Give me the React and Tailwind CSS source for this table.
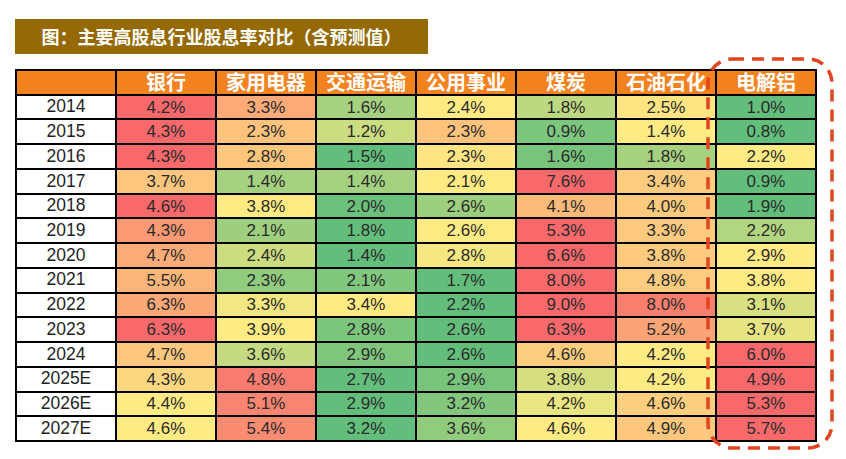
// Dividend yield comparison: each row is shaded with Excel's
// red-yellow-green 3-colour scale (min green, median yellow, max red).

const cols = ["银行", "家用电器", "交通运输", "公用事业", "煤炭", "石油石化", "电解铝"]

const rows = [
  ["2014", [4.2, 3.3, 1.6, 2.4, 1.8, 2.5, 1.0]],
  ["2015", [4.3, 2.3, 1.2, 2.3, 0.9, 1.4, 0.8]],
  ["2016", [4.3, 2.8, 1.5, 2.3, 1.6, 1.8, 2.2]],
  ["2017", [3.7, 1.4, 1.4, 2.1, 7.6, 3.4, 0.9]],
  ["2018", [4.6, 3.8, 2.0, 2.6, 4.1, 4.0, 1.9]],
  ["2019", [4.3, 2.1, 1.8, 2.6, 5.3, 3.3, 2.2]],
  ["2020", [4.7, 2.4, 1.4, 2.8, 6.6, 3.8, 2.9]],
  ["2021", [5.5, 2.3, 2.1, 1.7, 8.0, 4.8, 3.8]],
  ["2022", [6.3, 3.3, 3.4, 2.2, 9.0, 8.0, 3.1]],
  ["2023", [6.3, 3.9, 2.8, 2.6, 6.3, 5.2, 3.7]],
  ["2024", [4.7, 3.6, 2.9, 2.6, 4.6, 4.2, 6.0]],
  ["2025E", [4.3, 4.8, 2.7, 2.9, 3.8, 4.2, 4.9]],
  ["2026E", [4.4, 5.1, 2.9, 3.2, 4.2, 4.6, 5.3]],
  ["2027E", [4.6, 5.4, 3.2, 3.6, 4.6, 4.9, 5.7]],
]

const GREEN = [99, 190, 123]
const YELLOW = [255, 235, 132]
const RED = [248, 105, 107]

function mix(a, b, t) {
  return `rgb(${a.map((v, i) => Math.round(v + (b[i] - v) * t)).join(",")})`
}

function scale(values) {
  const sorted = [...values].sort((a, b) => a - b)
  const min = sorted[0]
  const max = sorted[sorted.length - 1]
  const mid = sorted[Math.floor(sorted.length / 2)]
  return (v) => {
    if (v <= mid) return mix(GREEN, YELLOW, mid === min ? 1 : (v - min) / (mid - min))
    return mix(YELLOW, RED, max === mid ? 0 : (v - mid) / (max - mid))
  }
}

const cjk = "font-['Noto_Sans_CJK_SC','Noto_Sans',sans-serif]"
const num = "font-['Liberation_Sans','Noto_Sans',sans-serif]"

export default function App() {
  return (
    <div className="relative w-[846px] h-[459px] bg-white overflow-hidden">
      <div className="pt-[19px] pl-[15px]">
        <div
          className={`w-[413px] h-[35px] bg-[#956a05] flex items-center justify-center text-white text-[18px] font-bold ${cjk}`}
        >
          图：主要高股息行业股息率对比（含预测值）
        </div>

        <div className="mt-[15px] w-[802px] h-[373px] bg-black p-[2px] grid grid-cols-8 grid-rows-[repeat(15,1fr)] gap-[2px]">
          <div className="bg-[#f4821f]" />
          {cols.map((c) => (
            <div
              key={c}
              className={`bg-[#f4821f] flex items-center justify-center text-white text-[20px] font-bold leading-none ${cjk}`}
            >
              {c}
            </div>
          ))}

          {rows.map(([year, vals]) => {
            const color = scale(vals)
            return [
              <div
                key={year}
                className={`bg-white flex items-center justify-center text-[17.5px] text-[#1f1f1f] leading-none ${num}`}
              >
                {year}
              </div>,
              ...vals.map((v, i) => (
                <div
                  key={year + i}
                  style={{ backgroundColor: color(v) }}
                  className={`flex items-center justify-center text-[17px] text-[#2a2a2a] leading-none ${num}`}
                >
                  {v.toFixed(1)}%
                </div>
              )),
            ]
          })}
        </div>
      </div>

      {/* highlight around 电解铝 */}
      <svg
        className="absolute left-[706px] top-[57px]"
        width="128"
        height="393"
        viewBox="0 0 128 393"
      >
        <rect
          x="2"
          y="2"
          width="124"
          height="389"
          rx="24"
          fill="none"
          stroke="#e2441f"
          strokeWidth="3.5"
          strokeDasharray="12 8"
        />
      </svg>
    </div>
  )
}
